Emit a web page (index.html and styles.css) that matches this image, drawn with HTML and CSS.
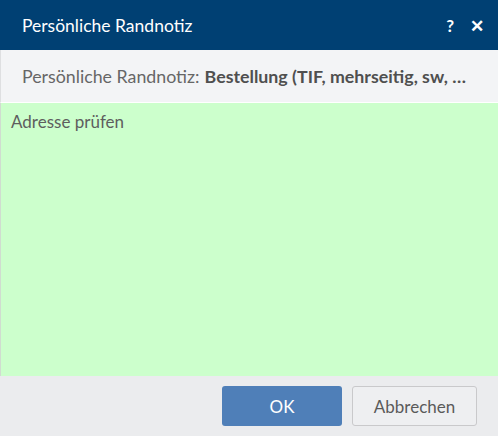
FILE: index.html
```html
<html>
<head>
<meta charset="UTF-8">
<link rel="stylesheet" href="styles.css">
</head>
<body>
<div class="dlg">
	<div class="dlg_head">
		<span class="dlg_title">Persönliche Randnotiz</span>
		<span class="dlg_tools"><span class="tool_help">?</span><span class="tool_close">&#x2715;</span></span>
	</div>
	<div class="dlg_sub">Persönliche Randnotiz: <b>Bestellung (TIF, mehrseitig, sw, …</b></div>
	<div class="dlg_note">Adresse prüfen</div>
	<div class="dlg_foot">
		<button class="btn btn_ok">OK</button>
		<button class="btn btn_cancel">Abbrechen</button>
	</div>
</div>
</body>
</html>
```
FILE: styles.css
```css
body { margin:0; font-family:"Lato", "Liberation Sans", sans-serif; background:#ffffff; }
.dlg { width:498px; height:437px; display:flex; flex-direction:column; }
.dlg_head { height:50px; background:#004073; color:#ffffff; display:flex; align-items:center; justify-content:space-between; padding:0 14px 0 22px; box-sizing:border-box; }
.dlg_title { font-size:17.5px; }
.dlg_tools { display:flex; gap:16px; font-weight:bold; font-size:17px; }
.dlg_sub { height:52px; background:#f3f4f6; color:#666666; font-size:17.8px; display:flex; align-items:center; padding-left:21px; border-left:1px solid #dedfe1; border-bottom:1px solid #ffffff; white-space:nowrap; }
.dlg_sub b { font-weight:bold; margin-left:5px; color:#4f4f4f; }
.dlg_note { flex:1; background:#ccffcc; color:#5e5e5e; font-size:17px; padding:8px 0 0 10px; border-left:1px solid #d0dcd0; }
.dlg_foot { height:60px; background:#ebecee; display:flex; justify-content:flex-end; align-items:center; gap:10px; padding-right:21px; border-bottom:1px solid #ffffff; }
.btn { height:40px; font-family:inherit; font-size:17px; border-radius:3px; }
.btn_ok { width:120px; background:#4f7fb8; border:0; color:#ffffff; }
.btn_cancel { width:125px; background:#eeeff1; border:1px solid #c9c9cb; color:#5a5a5a; }
```
